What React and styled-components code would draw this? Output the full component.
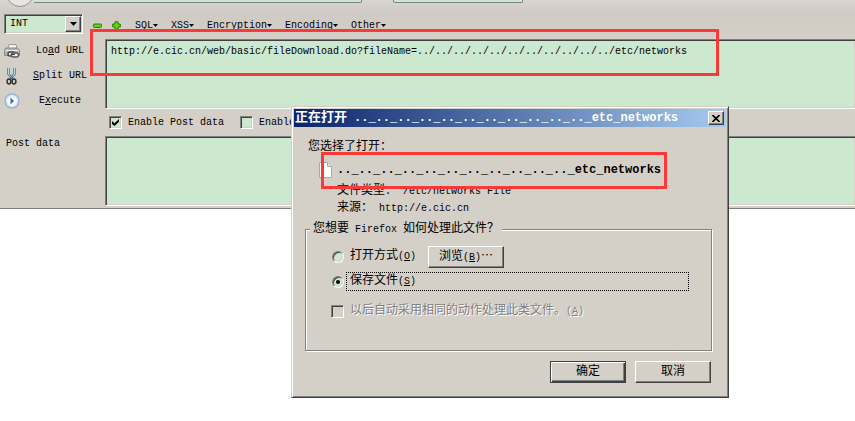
import React, { useState } from 'react'
import styled, { createGlobalStyle, css } from 'styled-components'

const DIRS = 11
const url = `http://e.cic.cn/web/basic/fileDownload.do?fileName=${'../'.repeat(
  DIRS
)}etc/networks`
const fileName = `${'.._'.repeat(DIRS)}etc_networks`
const menus = ['SQL', 'XSS', 'Encryption', 'Encoding', 'Other']

const App = () => {
  const [payload, setPayload] = useState(url)
  const [post, setPost] = useState('')
  const [mode, setMode] = useState('save')

  return (
    <Page>
      <GlobalStyle />
      <HackBar>
        <NavStrip>
          <BackButton aria-label="Back" />
          <AddressBar aria-label="Address" />
          <SearchBar aria-label="Search" />
        </NavStrip>
        <Toolbar>
          <TypeSelect>
            <select aria-label="Type" defaultValue="INT">
              <option>INT</option>
            </select>
            <Arrow>
              <svg width="7" height="4" viewBox="0 0 7 4">
                <path d="M0 0h7L3.5 4z" />
              </svg>
            </Arrow>
          </TypeSelect>
          <Signs>
            <IconButton aria-label="Remove">
              <svg width="9" height="9" viewBox="0 0 9 9">
                <rect x=".5" y="3" width="8" height="3.5" rx="1" fill="#5fd80c" stroke="#2a7a08" />
              </svg>
            </IconButton>
            <IconButton aria-label="Add">
              <svg width="9" height="9" viewBox="0 0 9 9">
                <path
                  d="M3 .8h3V3h2.3v3H6v2.3H3V6H.7V3H3z"
                  fill="#5fd80c"
                  stroke="#2a7a08"
                  strokeLinejoin="round"
                />
              </svg>
            </IconButton>
          </Signs>
          <Menus>
            {menus.map(menu => (
              <MenuButton key={menu}>
                {menu}
                <svg width="5" height="3" viewBox="0 0 5 3">
                  <path d="M0 0h5L2.5 3z" />
                </svg>
              </MenuButton>
            ))}
          </Menus>
        </Toolbar>
        <Row>
          <Actions>
            <Action>
              <PrinterIcon />
              <span>
                Lo<u>a</u>d URL
              </span>
            </Action>
            <Action>
              <ScissorsIcon />
              <span>
                <u>S</u>plit URL
              </span>
            </Action>
            <Action>
              <PlayIcon />
              <span>
                E<u>x</u>ecute
              </span>
            </Action>
          </Actions>
          <Area
            aria-label="URL"
            spellCheck={false}
            value={payload}
            onChange={e => setPayload(e.target.value)}
          />
        </Row>
        <Options>
          <Label>
            <Checkbox defaultChecked />
            Enable Post data
          </Label>
          <Label>
            <Checkbox />
            Enable
          </Label>
        </Options>
        <Row>
          <Side>
            <PostLabel htmlFor="post">Post data</PostLabel>
          </Side>
          <Area id="post" value={post} onChange={e => setPost(e.target.value)} />
        </Row>
      </HackBar>

      <Dialog role="dialog" aria-labelledby="title">
        <TitleBar>
          <Title id="title">
            <span>正在打开</span>
            <span>{fileName}</span>
          </Title>
          <Close aria-label="Close">
            <svg width="8" height="7" viewBox="0 0 8 7">
              <path d="M.5 0l7 7M7.5 0l-7 7" stroke="#000" strokeWidth="1.6" />
            </svg>
          </Close>
        </TitleBar>
        <Body>
          <Text>您选择了打开：</Text>
          <FileRow>
            <FileIcon />
            <strong>{fileName}</strong>
          </FileRow>
          <Details>
            <Text>
              文件类型：<Latin> /etc/networks File</Latin>
            </Text>
            <Text>
              来源：<Latin> http://e.cic.cn</Latin>
            </Text>
          </Details>
          <Group>
            <legend>
              您想要<Latin> Firefox </Latin>如何处理此文件？
            </legend>
            <Choice>
              <Radio checked={mode === 'open'} onChange={() => setMode('open')} id="open" />
              <ChoiceLabel htmlFor="open">
                打开方式<Key>O</Key>
              </ChoiceLabel>
              <Browse>
                浏览<Key>B</Key>
                <Dots>…</Dots>
              </Browse>
            </Choice>
            <Choice>
              <Radio checked={mode === 'save'} onChange={() => setMode('save')} id="save" />
              <ChoiceLabel htmlFor="save" $focused>
                保存文件<Key>S</Key>
              </ChoiceLabel>
            </Choice>
            <Choice $last>
              <Checkbox disabled id="always" />
              <ChoiceLabel htmlFor="always" $disabled>
                以后自动采用相同的动作处理此类文件。<Key>A</Key>
              </ChoiceLabel>
            </Choice>
          </Group>
          <Footer>
            <Button $primary>确定</Button>
            <Button>取消</Button>
          </Footer>
        </Body>
        <FileMark />
      </Dialog>
      <UrlMark />
    </Page>
  )
}

const Key = ({ children }) => (
  <Latin>
    (<u>{children}</u>)
  </Latin>
)

const PrinterIcon = () => (
  <svg width="16" height="16" viewBox="0 0 16 16">
    <path d="M4 5L5 1.5h7L13 5" fill="#f2f2f2" stroke="#9a9a9a" />
    <path d="M1.5 5h12l2 2.5v5h-15v-5z" fill="#b4b4b4" stroke="#8a8a8a" />
    <path d="M1.500 7.500h13" stroke="#ececec" />
    <rect x="4" y="9" width="7" height="4" rx="2" fill="#ddd" stroke="#4a4a4a" strokeWidth="1.400" />
    <rect x="7.500" y="10" width="7" height="4" rx="2" fill="#eee" stroke="#5a5a5a" strokeWidth="1.400" />
    <path d="M7 11.500h4" stroke="#444" />
  </svg>
)

const ScissorsIcon = () => (
  <svg width="16" height="18" viewBox="0 0 16 18">
    <path d="M4.500 1v6l4.500 5M10.500 1v6L6 12" fill="none" stroke="#4f7f96" strokeWidth="2.600" />
    <path d="M4.500 1v6l2 2.500M10.500 1v6l-2 2.500" fill="none" stroke="#b9dbe8" />
    <ellipse cx="5" cy="14.500" rx="1.900" ry="2.400" fill="none" stroke="#333" strokeWidth="1.500" />
    <ellipse cx="10" cy="14.500" rx="1.900" ry="2.400" fill="none" stroke="#333" strokeWidth="1.500" />
  </svg>
)

const PlayIcon = () => (
  <svg width="16" height="16" viewBox="0 0 16 16">
    <circle cx="8" cy="8" r="7" fill="#dfe9f6" stroke="#9db2d2" strokeWidth="1.500" />
    <circle cx="8" cy="8" r="4.500" fill="#f6fafe" />
    <path d="M6.500 4.500L10 8l-3.500 3.500z" fill="#2d6fc0" />
  </svg>
)

const FileIcon = () => (
  <svg width="13" height="16" viewBox="0 0 13 16">
    <path d="M.5.5h8l4 4v11H.5z" fill="#fff" stroke="#aaa" />
    <path d="M8.500.5v4h4" fill="#e4e4e4" stroke="#aaa" />
  </svg>
)

const GlobalStyle = createGlobalStyle`
  * {
    box-sizing: border-box;
  }
  body {
    margin: 0;
    background: #fff;
    overflow: hidden;
  }
  body, button, input, select, textarea {
    font-family: 'Liberation Mono', 'Noto Sans CJK SC', monospace;
    font-size: 10px;
    line-height: 16px;
    color: #000;
  }
  svg {
    display: block;
    flex: none;
  }
`

const sunken = css`
  border: 1px solid;
  border-color: #808080 #fff #fff #808080;
  box-shadow: inset 1px 1px #404040, inset -1px -1px #d4d0c8;
`

const raised = css`
  border: 1px solid;
  border-color: #fff #404040 #404040 #fff;
  box-shadow: inset -1px -1px #808080;
`

const Page = styled.div`
  position: relative;
  min-height: 100vh;
`

const HackBar = styled.div`
  background: linear-gradient(#d9d6cf, #cfcbc4 13px, #d4d0c8 38px);
  border-bottom: 1px solid #808080;
  padding-bottom: 2px;
`

const NavStrip = styled.div`
  display: flex;
  align-items: flex-start;
  height: 12px;
  padding-left: 6px;
  overflow: hidden;
`

const BackButton = styled.button`
  flex: none;
  width: 28px;
  height: 28px;
  margin-top: -21px;
  border: 1px solid #8c919a;
  border-radius: 50%;
  background: #e6e5e2;
`

const AddressBar = styled.input`
  width: 328px;
  height: 3px;
  padding: 0;
  border: 1px solid #808080;
  border-top: none;
  border-left: none;
  border-radius: 0 0 2px 0;
  background: #cce8cf;
`

const SearchBar = styled(AddressBar)`
  width: 130px;
  margin-left: 31px;
  border-left: 1px solid #808080;
  border-radius: 0 0 2px 2px;
`

const Toolbar = styled.div`
  display: flex;
  align-items: center;
  height: 27px;
  padding: 2px 4px;
`

const TypeSelect = styled.div`
  ${sunken}
  position: relative;
  align-self: flex-start;
  width: 79px;
  height: 20px;
  background: #cce8cf;
  select {
    display: block;
    width: 100%;
    height: 18px;
    padding: 0 5px;
    border: none;
    background: transparent;
    appearance: none;
  }
`

const Arrow = styled.span`
  ${raised}
  position: absolute;
  top: 1px;
  right: 1px;
  display: flex;
  align-items: center;
  justify-content: center;
  width: 16px;
  height: 16px;
  background: #d4d0c8;
  pointer-events: none;
`

const Signs = styled.div`
  display: flex;
  gap: 10px;
  margin-left: 10px;
`

const IconButton = styled.button`
  padding: 0;
  border: none;
  background: none;
`

const Menus = styled.div`
  display: flex;
  gap: 13px;
  margin-left: 14px;
`

const MenuButton = styled.button`
  display: flex;
  align-items: center;
  padding: 0;
  border: none;
  background: none;
`

const Row = styled.div`
  display: flex;
  align-items: flex-start;
`

const Side = styled.div`
  flex: none;
  width: 105px;
`

const Actions = styled(Side)`
  display: flex;
  flex-direction: column;
  gap: 5px;
`

const Action = styled.button`
  display: flex;
  align-items: center;
  height: 20px;
  padding: 3px 0 0 4px;
  border: none;
  background: none;
  span {
    width: 80px;
    text-align: center;
  }
`

const Area = styled.textarea`
  ${sunken}
  flex: 1;
  min-width: 0;
  height: 70px;
  padding: 4px 5px;
  background: #cce8cf;
  border-right: none;
  resize: none;
  outline: none;
`

const Options = styled.div`
  display: flex;
  align-items: center;
  gap: 16px;
  height: 27px;
  padding-left: 109px;
`

const Label = styled.label`
  display: flex;
  align-items: center;
  gap: 6px;
`

const PostLabel = styled.label`
  display: block;
  padding-left: 6px;
`

const Checkbox = styled.input.attrs({ type: 'checkbox' })`
  ${sunken}
  flex: none;
  width: 13px;
  height: 13px;
  margin: 0;
  appearance: none;
  background: ${props => (props.disabled ? '#d4d0c8' : '#cce8cf')};
  &:checked::before {
    content: '';
    display: block;
    width: 7px;
    height: 7px;
    margin: 2px;
    background: #000;
    clip-path: polygon(0 30%, 35% 60%, 100% 0, 100% 40%, 35% 100%, 0 70%);
  }
`

const Radio = styled.input.attrs({ type: 'radio', name: 'mode' })`
  ${sunken}
  flex: none;
  width: 12px;
  height: 12px;
  margin: 0 0 0 1px;
  border-radius: 50%;
  appearance: none;
  background: #cce8cf;
  &:checked::before {
    content: '';
    display: block;
    width: 4px;
    height: 4px;
    margin: 3px;
    border-radius: 50%;
    background: #000;
  }
`

const Dialog = styled.div`
  position: absolute;
  top: 106px;
  left: 291px;
  width: 438px;
  border: 1px solid;
  border-color: #d4d0c8 #404040 #404040 #d4d0c8;
  box-shadow: inset 1px 1px #fff, inset -1px -1px #808080;
  background: #d4d0c8;
  padding: 2px;
  font-size: 12px;
`

const TitleBar = styled.div`
  display: flex;
  align-items: center;
  justify-content: space-between;
  height: 18px;
  padding: 0 2px 0 1px;
  background: linear-gradient(90deg, #0a246a, #a6caf0);
`

const Title = styled.div`
  display: flex;
  gap: 7px;
  color: #fff;
  font-weight: bold;
  white-space: nowrap;
  span:first-child {
    font-size: 13px;
  }
`

const Close = styled.button`
  ${raised}
  display: flex;
  align-items: center;
  justify-content: center;
  width: 16px;
  height: 14px;
  padding: 0;
  background: #d4d0c8;
`

const Body = styled.div`
  padding: 12px 14px 12px 11px;
`

const Text = styled.div`
  padding-left: 3px;
  white-space: nowrap;
`

const Latin = styled.span`
  font-size: 10px;
  white-space: pre;
`

const FileRow = styled.div`
  display: flex;
  align-items: center;
  gap: 5px;
  height: 28px;
  padding: 2px 0 0 14px;
  white-space: nowrap;
`

const Details = styled.div`
  padding-left: 29px;
`

const Group = styled.fieldset`
  height: 130px;
  margin: 4px 0 10px;
  padding: 6px 22px 0 25px;
  border: 1px solid #808080;
  box-shadow: 1px 1px #fff, inset 1px 1px #fff;
  legend {
    margin-left: -21px;
    padding: 0 3px;
    background: #d4d0c8;
  }
`

const Choice = styled.div`
  display: flex;
  align-items: center;
  gap: 2px;
  height: 25px;
  margin-top: ${props => (props.$last ? '5px' : '0')};
`

const ChoiceLabel = styled.label`
  padding: 0 3px;
  border: 1px dotted transparent;
  white-space: nowrap;
  ${props => props.$focused && 'flex: 1; border-color: #000;'}
  ${props => props.$disabled && 'color: #808080; text-shadow: 1px 1px #fff;'}
`

const Button = styled.button`
  ${raised}
  width: 76px;
  height: 22px;
  padding: 0;
  background: #d4d0c8;
  font-size: 12px;
  ${props =>
    props.$primary &&
    'border-color: #404040; box-shadow: inset 1px 1px #fff, inset -1px -1px #404040, inset -2px -2px #808080;'}
`

const Browse = styled(Button)`
  margin-left: 6px;
`

const Dots = styled.span`
  font-family: 'Noto Sans CJK SC', sans-serif;
`

const Footer = styled.div`
  display: flex;
  justify-content: flex-end;
  gap: 9px;
  padding-right: 1px;
`

const Mark = styled.div`
  position: absolute;
  border: 3px solid #fb3a38;
  pointer-events: none;
`

const UrlMark = styled(Mark)`
  top: 29px;
  left: 90px;
  width: 629px;
  height: 47px;
`

const FileMark = styled(Mark)`
  top: 45px;
  left: 29px;
  width: 346px;
  height: 37px;
`

export default App
